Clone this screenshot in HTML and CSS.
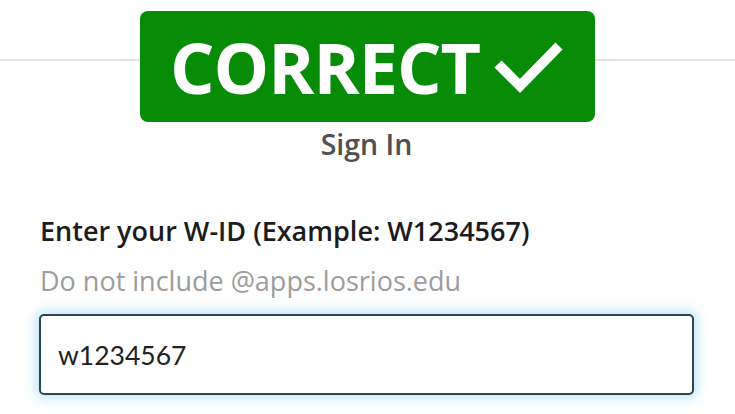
FILE: index.html
```html
<!DOCTYPE html>
<html lang="en">
<head>
<meta charset="utf-8">
<title>Sign In</title>
<link rel="stylesheet" href="styles.css">
</head>
<body>
<header class="topbar"></header>
<main class="signin">
  <h1 class="title">Sign In</h1>
  <label class="label" for="wid">Enter your W-ID (Example: W1234567)</label>
  <p class="hint">Do not include @apps.losrios.edu</p>
  <input class="field" id="wid" type="text" value="w1234567">
</main>
<div class="badge">
  <span class="badge-text">CORRECT</span>
  <svg class="badge-check" width="70" height="54" viewBox="0 0 70 54" aria-hidden="true">
    <path d="M4 24 L26 46 L65 6" fill="none" stroke="#fff" stroke-width="10" stroke-linecap="butt" stroke-linejoin="miter"/>
  </svg>
</div>
</body>
</html>
```
FILE: styles.css
```css
html, body {
  margin: 0;
  padding: 0;
  background: #fff;
}
body {
  width: 735px;
  height: 414px;
  overflow: hidden;
  position: relative;
  font-family: "Open Sans", "Liberation Sans", sans-serif;
}
.topbar {
  height: 59px;
  border-bottom: 2px solid #e2e2e2;
}
.signin {
  display: flex;
  flex-direction: column;
  padding: 0 41px 0 39px;
}
.title {
  margin: 66px 0 0;
  text-align: center;
  font-size: 28.5px;
  line-height: 34px;
  font-weight: 600;
  color: #505050;
}
.label {
  margin: 53px 0 0 1px;
  font-size: 27px;
  line-height: 34px;
  font-weight: 600;
  color: #1c1c1c;
}
.hint {
  margin: 15.5px 0 0 1px;
  font-size: 27px;
  line-height: 34px;
  color: #9c9c9c;
}
.field {
  margin-top: 16.5px;
  box-sizing: border-box;
  width: 655px;
  height: 81px;
  border: 2px solid #2c4654;
  border-radius: 5px;
  box-shadow: 0 0 12px 4px #c2eaf9;
  padding: 0 0 0 17px;
  font-family: Lato, "Liberation Sans", sans-serif;
  font-size: 26.5px;
  color: #222;
  background: #fff;
  outline: none;
}
.badge {
  position: absolute;
  left: 140px;
  top: 11px;
  width: 455px;
  height: 111px;
  box-sizing: border-box;
  background: #078c07;
  border-radius: 8px;
  display: flex;
  align-items: center;
  padding-left: 30px;
  gap: 14px;
}
.badge-text {
  font-family: "Open Sans", "Liberation Sans", sans-serif;
  font-weight: 700;
  font-size: 70px;
  line-height: 1;
  color: #fff;
  letter-spacing: -1px;
}
.badge-check {
  display: block;
}
```
